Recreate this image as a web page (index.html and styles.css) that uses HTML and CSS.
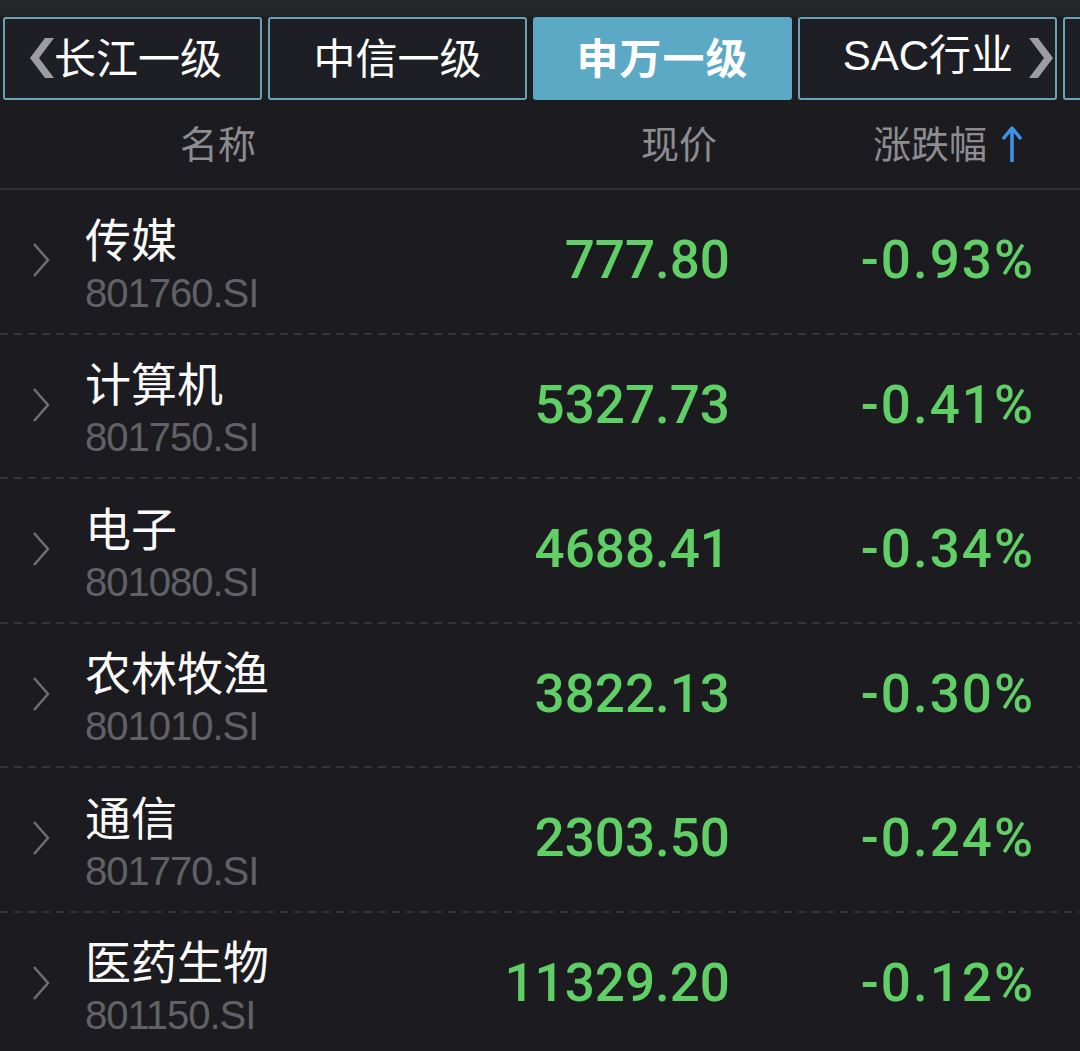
FILE: index.html
```html
<!DOCTYPE html>
<html lang="zh">
<head>
<meta charset="utf-8">
<link rel="stylesheet" href="styles.css">
</head>
<body>
<div class="tabs">
  <div class="tab"><svg class="tchev" width="24" height="40" viewBox="0 0 24 40"><path d="M24 0 L9 20 L24 40 L15 40 L0 20 L15 0 Z" fill="#9c9ca2"/></svg><span>长江一级</span></div>
  <div class="tab center"><span>中信一级</span></div>
  <div class="tab center active"><span>申万一级</span></div>
  <div class="tab center sac"><span>SAC行业</span><svg class="tchev r" width="24" height="40" viewBox="0 0 24 40"><path d="M0 0 L15 20 L0 40 L9 40 L24 20 L9 0 Z" fill="#9c9ca2"/></svg></div>
  <div class="tab"></div>
</div>
<div class="head">
  <div class="h-name">名称</div>
  <div class="h-price">现价</div>
  <div class="h-pct">涨跌幅<svg class="arrow" width="20" height="38" viewBox="0 0 20 38"><path d="M10 37 L10 4" stroke="#3f93e8" stroke-width="3.5" fill="none"/><path d="M1 14 L10 3 L19 14" stroke="#3f93e8" stroke-width="3.5" fill="none" stroke-linejoin="round"/></svg></div>
</div>
<div class="list">
  <div class="row">
    <svg class="chev" width="20" height="36" viewBox="0 0 20 36"><path d="M3 2 L17 18 L3 34" fill="none" stroke="#6e6e73" stroke-width="2.5"/></svg>
    <div class="name"><div class="cn">传媒</div><div class="code">801760.SI</div></div>
    <div class="price">777.80</div>
    <div class="pct">-0.93%</div>
  </div>
  <div class="row">
    <svg class="chev" width="20" height="36" viewBox="0 0 20 36"><path d="M3 2 L17 18 L3 34" fill="none" stroke="#6e6e73" stroke-width="2.5"/></svg>
    <div class="name"><div class="cn">计算机</div><div class="code">801750.SI</div></div>
    <div class="price">5327.73</div>
    <div class="pct">-0.41%</div>
  </div>
  <div class="row">
    <svg class="chev" width="20" height="36" viewBox="0 0 20 36"><path d="M3 2 L17 18 L3 34" fill="none" stroke="#6e6e73" stroke-width="2.5"/></svg>
    <div class="name"><div class="cn">电子</div><div class="code">801080.SI</div></div>
    <div class="price">4688.41</div>
    <div class="pct">-0.34%</div>
  </div>
  <div class="row">
    <svg class="chev" width="20" height="36" viewBox="0 0 20 36"><path d="M3 2 L17 18 L3 34" fill="none" stroke="#6e6e73" stroke-width="2.5"/></svg>
    <div class="name"><div class="cn">农林牧渔</div><div class="code">801010.SI</div></div>
    <div class="price">3822.13</div>
    <div class="pct">-0.30%</div>
  </div>
  <div class="row">
    <svg class="chev" width="20" height="36" viewBox="0 0 20 36"><path d="M3 2 L17 18 L3 34" fill="none" stroke="#6e6e73" stroke-width="2.5"/></svg>
    <div class="name"><div class="cn">通信</div><div class="code">801770.SI</div></div>
    <div class="price">2303.50</div>
    <div class="pct">-0.24%</div>
  </div>
  <div class="row last">
    <svg class="chev" width="20" height="36" viewBox="0 0 20 36"><path d="M3 2 L17 18 L3 34" fill="none" stroke="#6e6e73" stroke-width="2.5"/></svg>
    <div class="name"><div class="cn">医药生物</div><div class="code">801150.SI</div></div>
    <div class="price">11329.20</div>
    <div class="pct">-0.12%</div>
  </div>
</div>
</body>
</html>
```
FILE: styles.css
```css
* { box-sizing: border-box; }
html, body { margin: 0; padding: 0; }
body {
  width: 1080px;
  height: 1051px;
  overflow: hidden;
  background: #1c1c20;
  font-family: "Liberation Sans", "Noto Sans CJK SC", sans-serif;
  color: #fff;
}
.tabs {
  display: flex;
  gap: 6px;
  padding: 17px 0 0 3px;
  height: 101px;
  background: linear-gradient(#27282c 0, #232428 16px, #1c1d21 17px);
  overflow: hidden;
}
.tab {
  flex: 0 0 259px;
  height: 83px;
  border: 2px solid #68a3b4;
  border-radius: 3px;
  background: #1e1f25;
  display: flex;
  align-items: center;
  padding-left: 25px;
  font-family: "Noto Sans CJK SC", sans-serif;
  font-size: 42px;
  color: #fff;
}
.tab span { line-height: 1; margin-top: -6px; }
.tab.center { justify-content: center; padding-left: 0; }
.tab.active {
  background: #5ba9c4;
  border-color: #5ba9c4;
  font-weight: 700;
  letter-spacing: 1px;
}
.tab.sac { justify-content: flex-end; padding-right: 2px; }
.tab.sac span { font-family: "Liberation Sans", "Noto Sans CJK SC", sans-serif; font-size: 42px; }
.tab.sac .r { margin-left: 16px; }
.tchev { flex: 0 0 auto; margin-top: -2px; }
.head {
  height: 89px;
  display: grid;
  grid-template-columns: 180px 1fr 280px 303px;
  align-items: center;
  padding-right: 58px;
  border-bottom: 2px solid #303136;
  font-family: "Noto Sans CJK SC", sans-serif;
  font-size: 38px;
  color: #8c8c91;
}
.head > div { line-height: 1; margin-top: -6px; }
.h-name { grid-column: 2; }
.h-price { grid-column: 3; text-align: right; margin-right: 2px; }
.h-pct { grid-column: 4; display: flex; justify-content: flex-end; align-items: center; gap: 15px; }
.h-pct .arrow { margin-top: 4px; }
.list { display: flex; flex-direction: column; }
.row {
  height: 144.5px;
  display: grid;
  grid-template-columns: 85px 1fr 280px 303px;
  align-items: center;
  padding-right: 47px;
  background-image: linear-gradient(to right, #34353a 60%, transparent 60%);
  background-size: 14px 2px;
  background-repeat: repeat-x;
  background-position: left bottom;
}
.row.last { background-image: none; }
.chev { justify-self: start; margin-left: 31px; margin-top: -4px; }
.name { display: flex; flex-direction: column; gap: 10px; margin-top: 1px; }
.cn {
  font-family: "Noto Sans CJK SC", sans-serif;
  font-size: 46px;
  line-height: 50px;
  color: #fafafa;
}
.code {
  font-family: "Liberation Sans", sans-serif;
  font-size: 40px;
  line-height: 42px;
  letter-spacing: -1px;
  color: #616166;
}
.price, .pct {
  text-align: right;
  font-family: "Roboto", "Liberation Sans", sans-serif;
  font-weight: 500;
  font-size: 53px;
  line-height: 60px;
  color: #5fcf66;
  margin-top: -4px;
}
.pct { letter-spacing: 2px; margin-right: -2px; }
```
